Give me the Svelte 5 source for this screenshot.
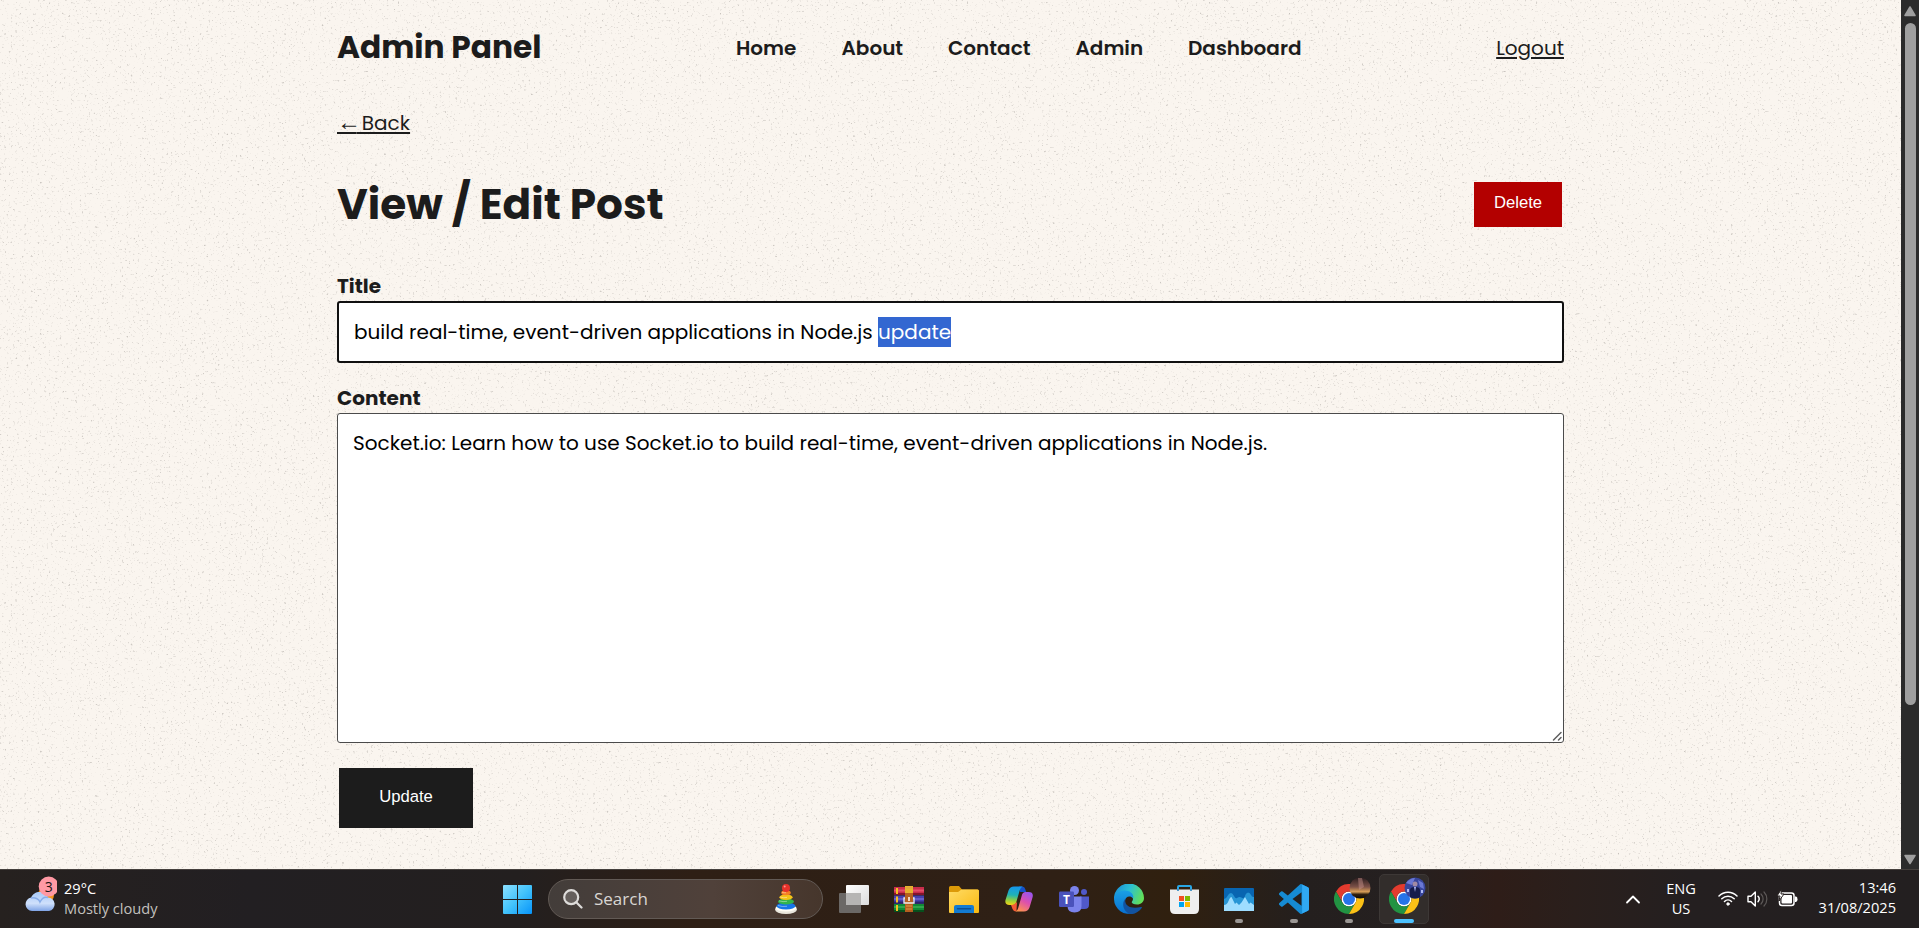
<script>
  const links = [
    { label: 'Home', width: 60 },
    { label: 'About', width: 61 },
    { label: 'Contact', width: 82 },
    { label: 'Admin', width: 67 },
    { label: 'Dashboard', width: 113 }
  ];
  let content = 'Socket.io: Learn how to use Socket.io to build real-time, event-driven applications in Node.js.';
</script>

{#snippet chrome()}
  <svg class="ico" viewBox="0 0 48 48" width="30" height="30">
    <circle cx="24" cy="24" r="12" fill="#fff" />
    <path fill="#e33b2e" d="M24 12h20.8A24 24 0 0 0 3.2 12l10.4 18A12 12 0 0 1 24 12z" />
    <path fill="#229342" d="M13.6 30 3.2 12A24 24 0 0 0 24 48l10.4-18a12 12 0 0 1-20.8 0z" />
    <path fill="#fbc116" d="M34.4 30 24 48a24 24 0 0 0 20.8-36H24a12 12 0 0 1 10.4 18z" />
    <circle cx="24" cy="24" r="9.6" fill="#2674e8" />
  </svg>
{/snippet}

<div class="screen">
  <div class="window">
    <div class="page">
      <svg class="grain" width="1901" height="869" aria-hidden="true">
        <filter id="grain" x="0" y="0" width="100%" height="100%" color-interpolation-filters="sRGB">
          <feTurbulence type="fractalNoise" baseFrequency="0.45" numOctaves="3" seed="8" />
          <feColorMatrix values="0 0 0 0 .42  0 0 0 0 .4  0 0 0 0 .38  1.2 0 0 0 -.76" />
        </filter>
        <rect width="1901" height="869" filter="url(#grain)" />
      </svg>
      <div class="container">
        <header>
          <div class="brand">Admin Panel</div>
          <nav>
            {#each links as link}
              <a href="#top" style:width="{link.width}px">{link.label}</a>
            {/each}
          </nav>
          <a class="link logout" href="#top">Logout</a>
        </header>
        <div class="back"><a class="link" href="#top"><span class="arrow">←</span> Back</a></div>
        <div class="heading">
          <h1>View / Edit Post</h1>
          <button class="delete">Delete</button>
        </div>
        <div class="label title-label">Title</div>
        <div class="input">build real-time, event-driven applications in Node.js&nbsp;<mark>update</mark></div>
        <div class="label content-label">Content</div>
        <div class="area">
          <textarea spellcheck="false" bind:value={content}></textarea>
          <svg class="grip" width="12" height="12" viewBox="0 0 12 12" stroke="#5f5f5f" stroke-width="1.500" stroke-linecap="round"><path d="M2.500 10 10 2.500M7.500 10 10 7.500" /></svg>
        </div>
        <button class="update">Update</button>
      </div>
    </div>
    <div class="scrollbar">
      <svg width="12" height="11" viewBox="0 0 12 11"><path d="M6 1 11 9.500H1z" fill="#9f9f9f" stroke="#9f9f9f" stroke-width="1.500" stroke-linejoin="round" /></svg>
      <div class="thumb"></div>
      <svg width="12" height="11" viewBox="0 0 12 11"><path d="M6 9.500 11 1.500H1z" fill="#9f9f9f" stroke="#9f9f9f" stroke-width="1.500" stroke-linejoin="round" /></svg>
    </div>
  </div>

  <div class="taskbar">
    <div class="weather">
      <svg width="34" height="38" viewBox="0 0 34 38">
        <defs>
          <linearGradient id="cloud" x1="0" y1="0" x2="0" y2="1"><stop offset="0" stop-color="#a9caf9" /><stop offset=".6" stop-color="#cfe0fb" /><stop offset="1" stop-color="#7fa4e6" /></linearGradient>
        </defs>
        <circle cx="23" cy="20" r="8" fill="#f6941e" />
        <path d="M9 36a6.800 6.800 0 0 1-.8-13.500C9.500 19 13 17 16.500 17c4 0 7.500 2.500 8.500 5.500A6.800 6.800 0 0 1 26 36z" fill="url(#cloud)" />
        <path d="M8 23c4-1 8 1 9 4 2-4 5-5.500 8-4.500" fill="none" stroke="#88ade9" stroke-width="1.500" />
        <circle cx="25.700" cy="11.500" r="10" fill="#ff99a4" />
        <text x="25.700" y="16.500" text-anchor="middle" font-size="14" fill="#1b1414">3</text>
      </svg>
      <div class="lines"><span>29°C</span><span class="muted">Mostly cloudy</span></div>
    </div>

    <div class="apps">
      <div class="cell">
        <svg class="ico" width="29" height="29" viewBox="0 0 29 29">
          <defs><linearGradient id="win" x1="0" y1="0" x2="1" y2="1"><stop offset="0" stop-color="#8ce0ff" /><stop offset=".5" stop-color="#43c3fb" /><stop offset="1" stop-color="#0794fa" /></linearGradient></defs>
          <path fill="url(#win)" d="M1 0h13v14H0V1q0-1 1-1zM15 0h13q1 0 1 1v13H15zM0 15h14v14H1q-1 0-1-1zM15 15h14v13q0 1-1 1H15z" />
        </svg>
      </div>
      <div class="search">
        <svg width="20" height="20" viewBox="0 0 20 20" fill="none" stroke="#dedcda" stroke-width="2.200" stroke-linecap="round"><circle cx="8.200" cy="8.200" r="7" fill="#655f5c" /><path d="m13.500 13.500 5 5" /></svg>
        <span>Search</span>
        <svg class="toy" width="24" height="32" viewBox="0 0 24 32">
          <ellipse cx="12" cy="26.500" rx="11" ry="4.500" fill="#e9e6dc" /><ellipse cx="12" cy="25" rx="10.500" ry="3.500" fill="#fffdf4" />
          <ellipse cx="12" cy="23" rx="9.500" ry="3.500" fill="#1676e8" /><ellipse cx="12" cy="18.500" rx="8" ry="3" fill="#33b54c" /><ellipse cx="12" cy="14.300" rx="6.600" ry="2.800" fill="#f4c318" /><ellipse cx="12" cy="9.800" rx="4.800" ry="2.500" fill="#f58025" /><circle cx="12" cy="5" r="4" fill="#e5322b" />
          <path d="M5 17.800q4 1.400 8 .5M6 14q4 1.300 7 .4M8 9.300q2 .8 4 .4M4 22.500q4 1.600 9 .8" stroke="#fff" stroke-opacity=".4" fill="none" /><circle cx="10.700" cy="3.600" r="1" fill="#ff9289" />
        </svg>
      </div>
      <div class="cell">
        <svg class="ico" width="30" height="28" viewBox="0 0 30 28">
          <defs><linearGradient id="tv" x1="0" y1="0" x2="1" y2="1"><stop offset="0" stop-color="#fff" /><stop offset="1" stop-color="#dcdcdc" /></linearGradient></defs>
          <rect y="8" width="22" height="20" rx="1" fill="#6b6866" /><rect x="7" width="23" height="20" rx="1" fill="url(#tv)" /><path d="M7 8h15v12H7z" fill="#b6b5b4" />
        </svg>
      </div>
      <div class="cell">
        <svg class="ico" width="30" height="26" viewBox="0 0 30 26">
          <path d="M0 1h30v8H0z" fill="#c92d4b" /><path d="M0 3.500h30v2H0z" fill="#e4506a" /><path d="M0 7h30v2H0z" fill="#84152c" />
          <path d="M0 9.500h30v8H0z" fill="#4740ae" /><path d="M0 12h30v2H0z" fill="#655dc8" /><path d="M0 15.500h30v2H0z" fill="#29236f" />
          <path d="M0 18h30v8H0z" fill="#118a35" /><path d="M0 20h30v2H0z" fill="#31a64c" /><path d="M0 24h30v2H0z" fill="#07501d" />
          <path d="M2 2h2v6H2zM2 10.500h2v6H2zM2 19h2v6H2z" fill="#f5c123" />
          <path d="M11 0h8v26h-8z" fill="#b65f1f" /><path d="M11 0h8v7h-8z" fill="#e6b22d" /><path d="M12 2h6M12 20h6M12 23h6" stroke="#dc9b48" />
          <path d="M11 12H10v5h10v-5h-1" fill="none" stroke="#eee" stroke-width="1.300" /><path d="M15 11v4" stroke="#fff" stroke-width="1.500" />
        </svg>
      </div>
      <div class="cell">
        <svg class="ico" width="30" height="27" viewBox="0 0 30 27">
          <defs><linearGradient id="fold" x1="0" y1="0" x2="1" y2="1"><stop offset="0" stop-color="#ffdc66" /><stop offset="1" stop-color="#f9b80f" /></linearGradient></defs>
          <path d="M0 1.500Q0 0 1.500 0H10l3 3.500H28.500Q30 3.500 30 5v8H0z" fill="#dc9a08" /><path d="M0 6h9l3.500-2.500H28.500Q30 3.500 30 5v21q0 1-1 1H1q-1 0-1-1z" fill="url(#fold)" />
          <path d="M5 27v-6q0-2 2-2h16q2 0 2 2v6z" fill="#137bd2" /><path d="M8.500 22.700h13" stroke="#0a4f94" stroke-width="1.400" stroke-linecap="round" />
        </svg>
      </div>
      <div class="cell">
        <svg class="ico" width="28" height="26" viewBox="0 0 28 26">
          <defs>
            <linearGradient id="cpa" x1=".4" y1="0" x2=".3" y2="1"><stop offset="0" stop-color="#1597ed" /><stop offset=".45" stop-color="#20b2b5" /><stop offset=".75" stop-color="#93cf3c" /><stop offset="1" stop-color="#f3d316" /></linearGradient>
            <linearGradient id="cpb" x1=".7" y1="0" x2=".2" y2="1"><stop offset="0" stop-color="#9b55ec" /><stop offset=".45" stop-color="#dc4fae" /><stop offset="1" stop-color="#ff954b" /></linearGradient>
          </defs>
          <path d="M14 .5h3.500q2 0 2.700 2.500l1 3h-6z" fill="#1551c8" />
          <path d="M9 .5h8.500Q15.500 1.500 14.800 4l-3.600 12.500Q10.500 19 8 19H4.500Q-.5 19 .5 14L3.500 4.500Q5 .5 9 .5z" fill="url(#cpa)" />
          <path d="M6 19q3.500.2 5-2.500l1 0-.6 9Q8.500 25.500 7.500 23z" fill="#f45a36" />
          <path d="M19 25.500h-8.500q2-1 2.700-3.500l3.600-12.500Q17.500 6 20.500 6h3q5.500 0 4 5.500L24.500 21.500q-1.500 4-5.500 4z" fill="url(#cpb)" />
        </svg>
      </div>
      <div class="cell">
        <svg class="ico" width="30" height="27" viewBox="0 0 30 27">
          <circle cx="25" cy="6" r="3" fill="#5059c9" /><path d="M21 10.500h9V19q0 4-4.500 4H21z" fill="#5059c9" />
          <circle cx="15.500" cy="4.500" r="4.500" fill="#7b83eb" /><path d="M9 10.500h13.500V20q0 6.500-7 6.500T8.500 20z" fill="#7b83eb" />
          <rect y="5.500" width="15" height="15.500" rx="1.200" fill="#4a52bb" /><text x="7.500" y="17.500" text-anchor="middle" class="tlogo">T</text>
        </svg>
      </div>
      <div class="cell">
        <svg class="ico" width="30" height="30" viewBox="0 0 30 30">
          <defs>
            <linearGradient id="eg" x1="0" y1=".2" x2="1" y2=".5"><stop offset="0" stop-color="#198dd8" /><stop offset=".5" stop-color="#2bbfd3" /><stop offset="1" stop-color="#62df59" /></linearGradient>
            <linearGradient id="eb" x1="0" y1="0" x2="0" y2="1"><stop offset="0" stop-color="#1aa0e5" /><stop offset="1" stop-color="#0870d0" /></linearGradient>
          </defs>
          <path d="M0 15A15 15 0 0 1 30 14c0 4-3 6.500-7 6.500-4 0-6-1.500-5-3 2.500-3 0-7-5-7C7 10.500 1 14 0 15z" fill="url(#eg)" />
          <path d="M0 15C.5 10 5 6.500 10.500 6.500c6 0 10 4 8.500 8-3-4-8-1.500-8 2.500 0 6 4 11 9 12A15 15 0 0 1 0 15z" fill="url(#eb)" />
          <path d="M11.500 14.500c-2 7 5 11 15.500 8.500.8-.2 1.200.2.700.9C25 28 19 31 15 29.800 8 26 8 18 11.500 14.500z" fill="#1253a0" />
        </svg>
      </div>
      <div class="cell">
        <svg class="ico" width="29" height="29" viewBox="0 0 29 29">
          <path d="M8 6V2q0-1 1-1h11q1 0 1 1v4" fill="none" stroke="#29a7e5" stroke-width="2" />
          <path d="M0 4.500h29V24q0 5-5 5H5q-5 0-5-5z" fill="#efefef" /><path d="M8 4v2M21 4v2" stroke="#1a7ebd" stroke-width="1.500" />
          <path d="M9 11h5v5H9z" fill="#f25022" /><path d="M15 11h5v5h-5z" fill="#7fba00" /><path d="M9 17h5v5H9z" fill="#00a4ef" /><path d="M15 17h5v5h-5z" fill="#ffb900" />
        </svg>
      </div>
      <div class="cell running">
        <svg class="ico" width="30" height="23" viewBox="0 0 30 23">
          <rect width="30" height="23" rx="1" fill="#0865b1" /><path d="M0 11q2 0 3.500-3T7 5q1.500 0 3 3t3 2 2.500-1 3 1 2.500-2 3-3.500q2 0 3 2.500t3 2V23H0z" fill="#2795d5" />
          <path d="M0 17q3 0 4.500-4T7.500 9L11 16l1.500-1.500L15 17l2.500-2.500L21 9l4 7 1.500-1.500L30 17v6H0z" fill="#9eddff" />
        </svg>
      </div>
      <div class="cell running">
        <svg class="ico" width="30" height="30" viewBox="0 0 24 24">
          <path fill="#168bd3" d="M23.150 2.587L18.210.21a1.494 1.494 0 0 0-1.705.29l-9.460 8.630-4.120-3.128a1 1 0 0 0-1.276.057L.327 7.261A1 1 0 0 0 .326 8.740L3.899 12 .326 15.260a1 1 0 0 0 .001 1.479L1.650 17.940a1 1 0 0 0 1.276.057l4.120-3.128 9.460 8.630a1.492 1.492 0 0 0 1.704.29l4.942-2.377A1.500 1.500 0 0 0 24 20.060V3.939a1.500 1.500 0 0 0-.85-1.352zM18.004 17.448L10.826 12l7.178-5.448v10.896z" />
          <path fill="#30a9f3" d="M18 .2q.5.300.5 1.200v21.200q0 .9-.5 1.200l5.100-2.400Q24 21 24 20V4q0-1-.85-1.400z" />
        </svg>
      </div>
      <div class="cell running">
        {@render chrome()}
        <svg class="avatar" width="22" height="22" viewBox="0 0 22 22">
          <defs><linearGradient id="dusk" x1="0" y1="0" x2="0" y2="1"><stop offset="0" stop-color="#2a1c1e" /><stop offset=".45" stop-color="#7c5148" /><stop offset=".68" stop-color="#d99f57" /><stop offset=".8" stop-color="#33220f" /><stop offset="1" stop-color="#0a0807" /></linearGradient></defs>
          <circle cx="11" cy="11" r="10.500" fill="url(#dusk)" /><path d="M9 1l4 0 2 9-5 3z" fill="#cf9691" opacity=".45" />
        </svg>
      </div>
      <div class="cell active">
        {@render chrome()}
        <svg class="avatar" width="22" height="22" viewBox="0 0 22 22">
          <circle cx="11" cy="11" r="10.500" fill="#38469c" /><path d="M2 6q4-5 9-5l-3 7zM14 3l5 3 1 6-4-2z" fill="#6a78d4" /><circle cx="11" cy="7" r="2.500" fill="#a08aa4" /><path d="M6 20V13q0-3 5-3t5 3v7q-5 3-10 0z" fill="#151b4b" /><path d="m10 10 1 5 1-5zM3 12h2v3H3zM17 13h2v3h-2z" fill="#adb9f5" />
        </svg>
      </div>
    </div>

    <div class="tray">
      <svg class="chev" width="16" height="11" viewBox="0 0 16 11" fill="none" stroke="#fff" stroke-width="1.800" stroke-linecap="round" stroke-linejoin="round"><path d="m2 8.500 6-6 6 6" /></svg>
      <div class="lines lang"><span>ENG</span><span>US</span></div>
      <svg class="wifi" width="20" height="16" viewBox="0 0 20 16" fill="none" stroke="#fff" stroke-width="1.500" stroke-linecap="round"><path d="M1 6a12.500 12.500 0 0 1 18 0M3.800 8.800a8.700 8.700 0 0 1 12.400 0M6.500 11.500a5 5 0 0 1 7 0" /><circle cx="10" cy="14" r="1.200" fill="#fff" stroke-width="1" /></svg>
      <svg class="sound" width="21" height="18" viewBox="0 0 21 18" fill="none" stroke="#fff" stroke-width="1.400" stroke-linejoin="round" stroke-linecap="round"><path d="M1 6.300h3L8.300 2v14L4 11.700H1z" /><path d="M11 6.300a4 4 0 0 1 0 5.400" /><path d="M14 4a7 7 0 0 1 0 10M17 2a10 10 0 0 1 0 14" stroke="#5d5958" stroke-width="1.200" /></svg>
      <svg class="battery" width="21" height="18" viewBox="0 0 21 18"><rect x="2.500" y="4" width="14.500" height="12.500" rx="2.500" fill="none" stroke="#fff" stroke-width="1.500" /><rect x="4.500" y="6" width="10.500" height="8.500" rx="1" fill="#fff" /><path d="M18 7.500h1q1.500 0 1.500 2.700T19 13h-1z" fill="#fff" /><path d="M4.500 0 0 7h3l-1 5 5-7H4z" fill="#fff" stroke="#272120" /></svg>
      <div class="lines clock"><span>13:46</span><span>31/08/2025</span></div>
    </div>
  </div>
</div>

<style>
  :global(body) { margin: 0; overflow: hidden; }
  * { box-sizing: border-box; }
  .screen { width: 1919px; height: 928px; overflow: hidden; display: flex; flex-direction: column; font-family: Poppins, Inter, sans-serif; color: #1c1c1c; }
  .window { flex: 1; display: flex; min-height: 0; }
  .page { flex: 1; position: relative; background: #faf5ef; overflow: hidden; }
  .grain { position: absolute; inset: 0; }
  .container { position: relative; width: 1227px; margin: 0 auto; display: flex; flex-direction: column; font-size: 20px; line-height: 30px; }
  header { height: 94px; display: flex; align-items: center; }
  .brand { width: 399px; font-size: 31.250px; font-weight: 700; white-space: nowrap; }
  nav { display: flex; gap: 45.500px; padding-top: 2px; }
  nav a { color: inherit; text-decoration: none; font-weight: 600; white-space: nowrap; }
  .link { color: inherit; text-decoration: underline 2px; text-underline-offset: 2px; }
  .logout { margin-left: auto; padding-top: 2px; }
  .back { margin-top: 14px; height: 30px; }
  .arrow { font-family: "Liberation Serif", serif; font-size: 24px; line-height: 20px; letter-spacing: -4.500px; }
  .heading { margin-top: 44px; height: 45px; display: flex; justify-content: space-between; align-items: center; padding-right: 2px; }
  h1 { margin: 0; font-size: 42.190px; font-weight: 700; line-height: 45px; }
  button { border: 0; font: 16.670px/20px "Liberation Sans", Arial, sans-serif; color: #fff; }
  .delete { width: 88px; height: 45px; background: #b30000; padding: 0 0 3px; }
  .label { font-weight: 700; height: 30px; }
  .title-label { margin-top: 44px; }
  .content-label { margin-top: 20px; }
  .input { height: 62px; border: 2px solid #101010; border-radius: 3px; background: #fff; color: #000; padding: 14px 15px; white-space: nowrap; }
  mark { display: inline-block; height: 30px; background: #3367d1; color: #fff; }
  .area { position: relative; height: 330px; }
  textarea { display: block; width: 1227px; height: 330px; margin: 0; border: 1px solid #4b4b4b; border-radius: 3px; background: #fff; color: #000; padding: 14px 15px; font: inherit; outline: 0; resize: none; }
  .grip { position: absolute; right: 1px; bottom: 1px; }
  .update { margin: 25px 0 0 2px; width: 134px; height: 60px; background: #1c1c1c; padding: 0 0 3px; }

  .scrollbar { width: 18px; background: #2b2b2b; display: flex; flex-direction: column; align-items: center; padding: 6px 0 4px; }
  .scrollbar svg { flex: none; }
  .thumb { width: 11px; height: 682px; margin: 6px 0 auto; border-radius: 6px; background: #9f9f9f; }

  .taskbar { height: 59px; flex: none; border-top: 1px solid #45403d; display: flex; font-family: "Open Sans", "Noto Sans", sans-serif; color: #fff; background: linear-gradient(90deg, #26211f 0, #221f22 13%, #231f1f 27%, #2e1f15 36%, #2f2015 55%, #30200f 61%, #241f1e 68%, #252020 73%, #2e1d18 78%, #2a1f1c 82%, #241f20 88%, #231f20 100%); }
  .weather { width: 490px; display: flex; padding: 5px 0 0 23px; gap: 7px; }
  .lines { display: flex; flex-direction: column; font-size: 14.600px; line-height: 20px; white-space: nowrap; }
  .weather .lines { padding-top: 3px; }
  .muted { color: #c3c0be; }
  .apps { display: flex; align-items: center; }
  .cell { position: relative; width: 55px; height: 58px; display: flex; align-items: center; justify-content: center; }
  .search { width: 275px; height: 40px; margin: 0 3.500px 0 3px; border-radius: 20px; border: 1px solid #625a55; background: linear-gradient(90deg, #433d3a, #50413a 60%, #46362c); display: flex; align-items: center; padding: 0 24px 0 14px; font-size: 17px; color: #d9d6d3; }
  .search span { margin-left: 11px; margin-right: auto; position: relative; top: -1px; }
  .tlogo { font: 700 12px "Open Sans", sans-serif; fill: #fff; }
  .running::after, .active::after { content: ""; position: absolute; bottom: 5px; width: 8px; height: 4px; border-radius: 2px; background: #9b9794; }
  .active::after { width: 20px; background: #4cc2ff; }
  .active::before { content: ""; position: absolute; inset: 4px 2.500px; border: 1px solid #3d3836; border-radius: 5px; background: #322d2b; }
  .ico { position: relative; }
  .avatar { position: absolute; left: 27px; top: 7px; }
  .tray { margin-left: auto; display: flex; padding: 7px 23px 0 0; }
  .chev { margin: 17px 25px 0 0; }
  .lang { width: 30px; text-align: center; margin-right: 22px; padding-top: 1px; }
  .wifi { margin: 13px 9px 0 0; }
  .sound { margin: 13px 9px 0 0; }
  .battery { margin: 12px 20px 0 0; }
  .clock { text-align: right; width: 78px; }
</style>
